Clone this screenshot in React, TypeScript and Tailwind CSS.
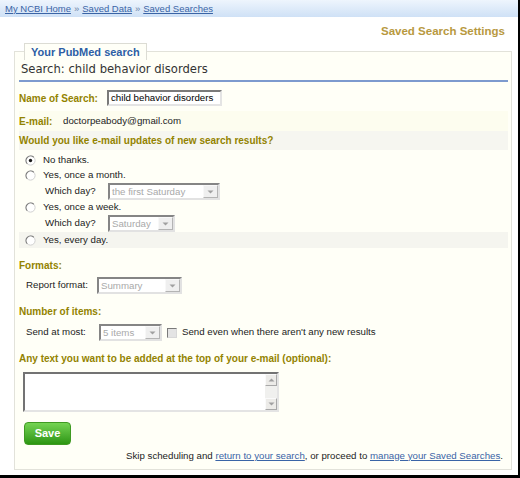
import React from "react";

const Radio = ({ checked = false }: { checked?: boolean }) => (
  <svg width="11" height="11" viewBox="0 0 11 11" className="shrink-0">
    <circle cx="5.5" cy="5.5" r="4.6" fill="#ffffff" stroke="#d0d0d0" strokeWidth="1" />
    <path d="M2.25 8.75 A4.6 4.6 0 0 1 8.75 2.25" fill="none" stroke="#7a7a7a" strokeWidth="1.1" />
    {checked && <circle cx="5.5" cy="5.5" r="1.7" fill="#1a1a1a" />}
  </svg>
);

const Arrow = ({ up = false }: { up?: boolean }) => (
  <svg width="7" height="4" viewBox="0 0 7 4">
    {up ? <path d="M0.5 3.5 L3.5 0.5 L6.5 3.5 Z" fill="#a0a0a0" /> : <path d="M0.5 0.5 L6.5 0.5 L3.5 3.5 Z" fill="#a0a0a0" />}
  </svg>
);

const Select = ({ w, text }: { w: string; text: string }) => (
  <div
    className={`${w} h-[17px] flex border-2 border-t-[#858585] border-l-[#858585] border-r-[#e2e2e2] border-b-[#e2e2e2] bg-white`}
  >
    <div className="flex-1 pl-[2px] text-[9.7px] leading-[13px] text-[#a9a9a9] overflow-hidden whitespace-nowrap">{text}</div>
    <div className="w-[15px] h-full flex items-center justify-center bg-[#efefef] border border-t-[#f8f8f8] border-l-[#f8f8f8] border-r-[#b4b4b4] border-b-[#b4b4b4]">
      <Arrow />
    </div>
  </div>
);

const Label = ({ children, w }: { children: React.ReactNode; w?: string }) => (
  <span className={`${w ?? ""} font-bold text-[10px] text-[#938300] whitespace-nowrap`}>{children}</span>
);

export default function App() {
  return (
    <div className="w-[520px] h-[478px] bg-white border-r-2 border-b-[3px] border-black overflow-hidden font-['Liberation_Sans',Arial,sans-serif] text-[9.7px] text-[#222]">
      {/* breadcrumb bar */}
      <div className="h-[17px] bg-linear-to-b from-[#eef5fd] to-[#cfe1f6] flex items-center pl-[5px] text-[9.5px] leading-none">
        <a className="text-[#3a64a6] underline">My NCBI Home</a>
        <span className="text-[#6f86a6] mx-[3px]">»</span>
        <a className="text-[#3a64a6] underline">Saved Data</a>
        <span className="text-[#6f86a6] mx-[3px]">»</span>
        <a className="text-[#3a64a6] underline">Saved Searches</a>
      </div>

      <div className="h-[26px] pt-[4px] flex items-center justify-end pr-[13px] text-[11.5px] font-bold text-[#b8993f]">
        Saved Search Settings
      </div>

      <fieldset className="ml-[14px] mr-[6px] border border-[#e2e2da] bg-[#fffff7] pl-[4px] pr-[3px] pb-[5px]">
        <legend className="ml-[5px] h-[17px] px-[6px] border-t border-l border-r border-[#dcdcd4] bg-[#fffff7] text-[11px] font-bold text-[#2d5ea6] leading-[16px]">
          Your PubMed search
        </legend>

        <div className="h-[20px] flex items-center pl-[2px] font-['DejaVu_Sans',sans-serif] text-[11.6px] text-[#333]">
          Search: child behavior disorders
        </div>
        <div className="h-[2px] bg-[#7d9ace]" />

        <div className="mt-[8px] h-[16px] flex items-center">
          <Label w="w-[88px]">Name of Search:</Label>
          <div className="w-[115px] h-[16px] border-2 border-t-[#7a7a7a] border-l-[#7a7a7a] border-r-[#e4e4e4] border-b-[#e4e4e4] bg-white pl-[2px] text-[9.7px] leading-[12px] text-black whitespace-nowrap overflow-hidden">
            child behavior disorders
          </div>
        </div>

        <div className="mt-[5px] h-[20px] flex items-center bg-[#fdfdef]">
          <Label w="w-[44px]">E-mail:</Label>
          <span>doctorpeabody@gmail.com</span>
        </div>

        <div className="h-[19px] flex items-center bg-[#f6f6f0]">
          <Label>Would you like e-mail updates of new search results?</Label>
        </div>

        <div className="mt-[3px] h-[15px] flex items-center pl-[6px] gap-[7px]">
          <Radio checked />
          <span>No thanks.</span>
        </div>
        <div className="h-[15px] flex items-center pl-[6px] gap-[7px]">
          <Radio />
          <span>Yes, once a month.</span>
        </div>
        <div className="h-[17px] flex items-center pl-[26px]">
          <span className="w-[63px]">Which day?</span>
          <Select w="w-[112px]" text="the first Saturday" />
        </div>
        <div className="h-[15px] flex items-center pl-[6px] gap-[7px]">
          <Radio />
          <span>Yes, once a week.</span>
        </div>
        <div className="h-[17px] flex items-center pl-[26px]">
          <span className="w-[63px]">Which day?</span>
          <Select w="w-[67px]" text="Saturday" />
        </div>
        <div className="h-[16px] flex items-center pl-[6px] gap-[7px] bg-[#f5f5ef]">
          <Radio />
          <span>Yes, every day.</span>
        </div>

        <div className="mt-[9px] h-[16px] flex items-center">
          <Label>Formats:</Label>
        </div>
        <div className="mt-[4px] h-[17px] flex items-center pl-[7px]">
          <span className="w-[71px]">Report format:</span>
          <Select w="w-[85px]" text="Summary" />
        </div>

        <div className="mt-[9px] h-[16px] flex items-center">
          <Label>Number of items:</Label>
        </div>
        <div className="mt-[5px] h-[17px] flex items-center pl-[7px]">
          <span className="w-[73px]">Send at most:</span>
          <Select w="w-[63px]" text="5 items" />
          <div className="ml-[5px] w-[10px] h-[10px] border border-t-[#7a7a7a] border-l-[#7a7a7a] border-r-[#d8d8d8] border-b-[#d8d8d8] bg-[#e4e4e4]" />
          <span className="ml-[5px]">Send even when there aren't any new results</span>
        </div>

        <div className="mt-[9px] h-[16px] flex items-center">
          <Label>Any text you want to be added at the top of your e-mail (optional):</Label>
        </div>

        <div className="mt-[6px] ml-[4px] w-[256px] h-[40px] flex border-2 border-t-[#737373] border-l-[#737373] border-r-[#e4e4e4] border-b-[#e4e4e4] bg-white">
          <div className="flex-1" />
          <div className="w-[12px] h-full flex flex-col bg-[#f0f0ee]">
            <div className="h-[12px] flex items-center justify-center bg-[#ecebe8] border border-t-[#fafafa] border-l-[#fafafa] border-r-[#a8a8a8] border-b-[#a8a8a8]">
              <Arrow up />
            </div>
            <div className="flex-1" />
            <div className="h-[12px] flex items-center justify-center bg-[#ecebe8] border border-t-[#fafafa] border-l-[#fafafa] border-r-[#a8a8a8] border-b-[#a8a8a8]">
              <Arrow />
            </div>
          </div>
        </div>

        <div className="mt-[10px] ml-[5px] w-[47px] h-[23px] rounded-[4px] border border-[#3f9a22] bg-linear-to-b from-[#74d452] to-[#2c9610] flex items-center justify-center text-white font-bold text-[11px]">
          Save
        </div>

        <div className="mt-[3px] h-[16px] flex items-center justify-end pr-[5px] whitespace-nowrap">
          <span>Skip scheduling and&nbsp;</span>
          <a className="text-[#3a64a6] underline">return to your search</a>
          <span>, or proceed to&nbsp;</span>
          <a className="text-[#3a64a6] underline">manage your Saved Searches</a>
          <span>.</span>
        </div>
      </fieldset>
    </div>
  );
}
